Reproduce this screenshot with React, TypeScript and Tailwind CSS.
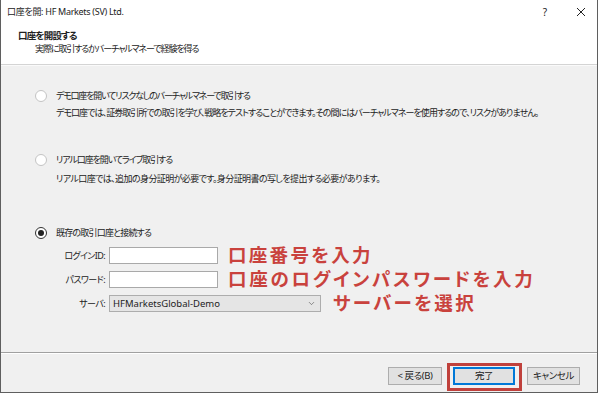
import { ChevronDown } from 'lucide-react';

const jp = "font-['Noto_Sans','Noto_Sans_CJK_JP',sans-serif] [font-feature-settings:'palt']";

function Radio({ checked }: { checked?: boolean }) {
  return (
    <div
      className={`w-[12px] h-[12px] rounded-full border bg-white flex items-center justify-center shrink-0 ${
        checked ? 'border-[#333]' : 'border-[#c4c4c4]'
      }`}
    >
      {checked && <div className="w-[6px] h-[6px] rounded-full bg-[#222]" />}
    </div>
  );
}

export default function App() {
  return (
    <div className={`w-[600px] h-[394px] bg-white ${jp} text-[#222]`}>
      <div className="w-[598px] h-[393px] border-l border-r border-b border-[#5f5f5f] flex flex-col">
        {/* Title bar + header */}
        <div className="bg-white h-[64px] shrink-0">
          <div className="h-[24px] flex items-center pl-[6px] pr-[10px] text-[9px]">
            <span className="flex-1 tracking-[-0.3px]">口座を開: HF Markets (SV) Ltd.</span>
            <span className="w-[10px] text-center text-[10px] mr-[26px]">?</span>
            <svg width="10" height="10" viewBox="0 0 10 10" className="mr-[1px]">
              <path d="M1 1 L9 9 M9 1 L1 9" stroke="#222" strokeWidth="1" />
            </svg>
          </div>
          <div className="pl-[17px] pt-[5px] leading-[13px]">
            <div className="font-bold text-[9.5px] tracking-[-0.8px]">口座を開設する</div>
            <div className="pl-[17px] text-[9px] tracking-[-1.1px]">実際に取引するかバーチャルマネーで経験を得る</div>
          </div>
        </div>
        <div className="h-px bg-[#d4d4d4] shrink-0" />
        <div className="h-px bg-[#fafafa] shrink-0" />

        {/* Body */}
        <div className="flex-1 bg-[#f0f0f0] pl-[34px] text-[9px] leading-[14px] tracking-[-0.8px]">
          <div className="mt-[23px] flex items-center gap-[9px]">
            <Radio />
            <span className="tracking-[-1.2px]">デモ口座を開いてリスクなしのバーチャルマネーで取引する</span>
          </div>
          <div className="mt-[3px] pl-[21px] whitespace-nowrap tracking-[-0.95px]">
            デモ口座では、証券取引所での取引を学び、戦略をテストすることができます。その間にはバーチャルマネーを使用するので、リスクがありません。
          </div>

          <div className="mt-[33px] flex items-center gap-[9px]">
            <Radio />
            <span className="tracking-[-1.1px]">リアル口座を開いてライブ取引する</span>
          </div>
          <div className="mt-[5px] pl-[21px] whitespace-nowrap tracking-[-0.6px]">
            リアル口座では、追加の身分証明が必要です。身分証明書の写しを提出する必要があります。
          </div>

          <div className="mt-[40px] flex items-center gap-[9px]">
            <Radio checked />
            <span>既存の取引口座と接続する</span>
          </div>

          <div className="mt-[7px] flex flex-col gap-[7px] tracking-normal">
            <div className="h-[17px] flex items-center">
              <span className="w-[74px] text-right pr-[4px] tracking-[-0.6px]">ログインID:</span>
              <div className="w-[109px] h-[17px] bg-white border border-[#a9a9a9]" />
              <span className="ml-[10px] text-[18.5px] leading-none font-bold tracking-[2.3px] text-[#c9423d] whitespace-nowrap">
                口座番号を入力
              </span>
            </div>
            <div className="h-[17px] flex items-center">
              <span className="w-[74px] text-right pr-[4px] tracking-[-0.6px]">パスワード:</span>
              <div className="w-[109px] h-[17px] bg-white border border-[#a9a9a9]" />
              <span className="ml-[10px] text-[18.5px] leading-none font-bold tracking-[2.7px] text-[#c9423d] whitespace-nowrap">
                口座のログインパスワードを入力
              </span>
            </div>
            <div className="h-[17px] flex items-center">
              <span className="w-[74px] text-right pr-[4px] tracking-[-0.6px]">サーバ:</span>
              <div className="w-[212px] h-[17px] bg-[#e5e5e5] border border-[#adadad] flex items-center pl-[3px] pr-[4px] text-[9.5px]">
                <span className="flex-1">HFMarketsGlobal-Demo</span>
                <ChevronDown size={9} strokeWidth={1.5} color="#444" />
              </div>
              <span className="ml-[12px] text-[18.5px] leading-none font-bold tracking-[2.4px] text-[#c9423d] whitespace-nowrap">
                サーバーを選択
              </span>
            </div>
          </div>
        </div>

        {/* Footer */}
        <div className="h-px bg-[#a0a0a0] shrink-0" />
        <div className="h-px bg-white shrink-0" />
        <div className="h-[38px] bg-[#f0f0f0] shrink-0 flex items-start justify-end pr-[17px] pt-[9px] text-[9.5px] tracking-[-0.4px]">
          <button className="mt-[4px] w-[54px] h-[18px] bg-[#e1e1e1] border border-[#adadad] flex items-center justify-center">
            &lt; 戻る(B)
          </button>
          <div className="ml-[5px] border-[3px] border-[#c0413c] p-[1px] pl-[3px] pr-[4px] pb-[3px]">
            <button className="w-[62px] h-[18px] bg-[#e1e1e1] border-2 border-[#0078d7] flex items-center justify-center">
              完了
            </button>
          </div>
          <button className="ml-[5px] mt-[4px] w-[53px] h-[18px] bg-[#e1e1e1] border border-[#adadad] flex items-center justify-center">
            キャンセル
          </button>
        </div>
      </div>
    </div>
  );
}
